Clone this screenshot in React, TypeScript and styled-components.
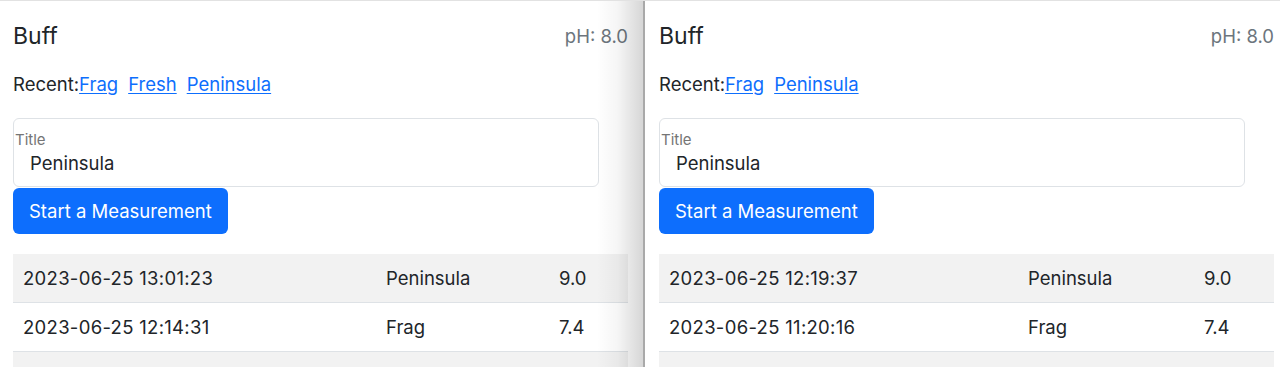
import React from "react";
import styled, { createGlobalStyle } from "styled-components";

const Global = createGlobalStyle`
  html, body { margin: 0; padding: 0; background: #ffffff; }
  body { font-family: Inter, "Noto Sans", "Liberation Sans", sans-serif; color: #212529; }
  * { box-sizing: border-box; }
`;

const Screen = styled.div`
  display: flex;
  height: 367px;
  overflow: hidden;
  border-top: 1px solid #e2e2e2;
`;

const Window = styled.section<{ $left: number; $right: number; $shade?: boolean }>`
  position: relative;
  flex: ${(p) => (p.$shade ? "0 0 643px" : "1 1 auto")};
  padding: 0 ${(p) => p.$right}px 0 ${(p) => p.$left}px;
  overflow: hidden;
  background: #fff;
  &::after {
    content: "";
    display: ${(p) => (p.$shade ? "block" : "none")};
    position: absolute;
    top: 0;
    right: 0;
    bottom: 0;
    width: 46px;
    pointer-events: none;
    background: linear-gradient(to right, rgba(0, 0, 0, 0) 0%, rgba(0, 0, 0, 0.04) 45%, rgba(0, 0, 0, 0.16) 100%);
  }
`;

const Divider = styled.div`
  flex: 0 0 2px;
  background: #a9a9a9;
`;

const Content = styled.div`
  width: 615px;
`;

const Header = styled.header`
  display: flex;
  justify-content: space-between;
  align-items: center;
  height: 30px;
  margin-top: 20px;
`;

const Title = styled.h1`
  margin: 0;
  font-size: 23px;
  font-weight: 400;
  line-height: 30px;
`;

const Ph = styled.span`
  font-size: 18.5px;
  color: #6c757d;
`;

const Recent = styled.div`
  display: flex;
  align-items: center;
  margin-top: 20px;
  height: 26px;
  font-size: 18.5px;
`;

const RecentLink = styled.a`
  color: #0d6efd;
  text-decoration: underline;
  text-underline-offset: 2px;
  margin-right: 10px;
  cursor: pointer;
`;

const Field = styled.div<{ $width: number }>`
  margin-top: 21px;
  width: ${(p) => p.$width}px;
  height: 69px;
  border: 1px solid #dee2e6;
  border-radius: 6px;
  display: flex;
  flex-direction: column;
`;

const FieldLabel = styled.label`
  margin-top: 12px;
  padding-left: 1px;
  font-size: 15px;
  line-height: 18px;
  color: #757575;
`;

const FieldValue = styled.div`
  margin-top: 2px;
  padding-left: 16px;
  font-size: 18.5px;
  line-height: 24px;
  color: #212529;
`;

const Button = styled.button`
  display: block;
  margin-top: 1px;
  height: 46px;
  padding: 0 16px;
  border: none;
  border-radius: 6px;
  background: #0d6efd;
  color: #fff;
  font-family: inherit;
  font-size: 18.5px;
  cursor: pointer;
`;

const Table = styled.div`
  margin-top: 20px;
  width: 615px;
`;

const Row = styled.div<{ $striped: boolean; $cols: string }>`
  display: grid;
  grid-template-columns: ${(p) => p.$cols};
  align-items: center;
  height: 49px;
  border-bottom: 1px solid #dee2e6;
  background: ${(p) => (p.$striped ? "#f2f2f2" : "#ffffff")};
  font-size: 18.5px;
`;

const Cell = styled.div<{ $spaced?: boolean }>`
  padding-left: 10px;
  white-space: nowrap;
  letter-spacing: ${(p) => (p.$spaced ? "0.3px" : "normal")};
`;

type Measurement = { time: string; name: string; ph: string };

type PanelProps = {
  recent: string[];
  rows: Measurement[];
  cols: string;
};

function Panel({ recent, rows, cols }: PanelProps) {
  return (
    <Content>
      <Header>
        <Title>Buff</Title>
        <Ph>pH: 8.0</Ph>
      </Header>
      <Recent>
        Recent:
        {recent.map((r) => (
          <RecentLink key={r}>{r}</RecentLink>
        ))}
      </Recent>
      <Field $width={586}>
        <FieldLabel>Title</FieldLabel>
        <FieldValue>Peninsula</FieldValue>
      </Field>
      <Button>Start a Measurement</Button>
      <Table>
        {rows.map((m, i) => (
          <Row key={i} $striped={i % 2 === 0} $cols={cols}>
            <Cell $spaced>{m.time}</Cell>
            <Cell>{m.name}</Cell>
            <Cell>{m.ph}</Cell>
          </Row>
        ))}
        <Row $striped $cols={cols} />
      </Table>
    </Content>
  );
}

export default function App() {
  return (
    <>
      <Global />
      <Screen>
        <Window $left={13} $right={15} $shade>
          <Panel
            recent={["Frag", "Fresh", "Peninsula"]}
            cols="363px 173px 1fr"
            rows={[
              { time: "2023-06-25 13:01:23", name: "Peninsula", ph: "9.0" },
              { time: "2023-06-25 12:14:31", name: "Frag", ph: "7.4" },
            ]}
          />
        </Window>
        <Divider />
        <Window $left={14} $right={0}>
          <Panel
            recent={["Frag", "Peninsula"]}
            cols="359px 176px 1fr"
            rows={[
              { time: "2023-06-25 12:19:37", name: "Peninsula", ph: "9.0" },
              { time: "2023-06-25 11:20:16", name: "Frag", ph: "7.4" },
            ]}
          />
        </Window>
      </Screen>
    </>
  );
}
